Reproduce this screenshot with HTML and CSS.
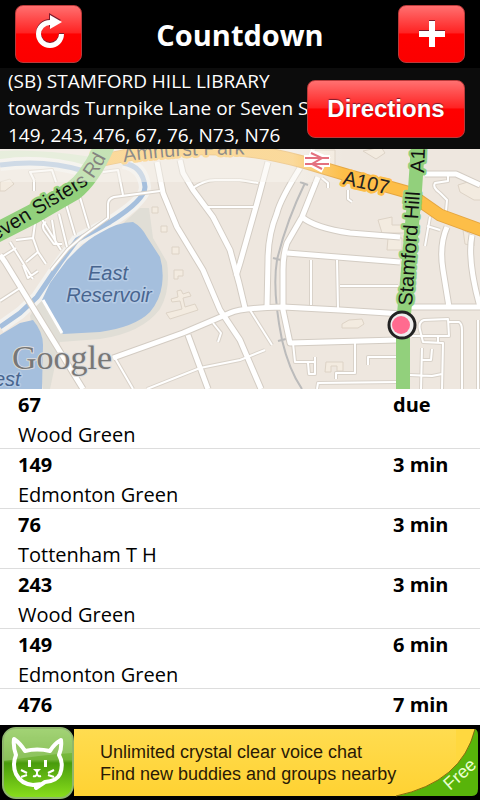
FILE: index.html
```html
<!DOCTYPE html>
<html lang="en">
<head>
  <meta charset="UTF-8">
  <meta name="viewport" content="width=device-width, initial-scale=1">
  <title>Countdown</title>
  <link rel="stylesheet" href="styles.css">
</head>
<body>
  <header class="header">
    <button class="button icon-button" aria-label="Refresh">
      <svg width="32" height="38" viewBox="0 0 32 38">
        <path d="M17 6.500A11.500 11.500 0 1 0 28.500 18" fill="none" stroke="#7a1b2c" stroke-width="5"/>
        <path d="M16 -2v14l12-7z" fill="#7a1b2c"/>
        <path d="M17 7.500A11.500 11.500 0 1 0 28.500 19" fill="none" stroke="#fff" stroke-width="5"/>
        <path d="M17 0v14l12-7z" fill="#fff"/>
      </svg>
    </button>
    <h1>Countdown</h1>
    <button class="button icon-button" aria-label="Add">
      <svg width="28" height="28" viewBox="0 0 28 28">
        <path d="M11 0h6v10h10v6H17v10h-6V16H1v-6h10z" fill="#7a1b2c"/>
        <path d="M11 1h6v10h10v6H17v10h-6V17H1v-6h10z" fill="#fff"/>
      </svg>
    </button>
  </header>

  <section class="stop">
    <p>(SB) STAMFORD HILL LIBRARY</p>
    <p>towards Turnpike Lane or Seven Sisters</p>
    <p>149, 243, 476, 67, 76, N73, N76</p>
    <button class="button directions">Directions</button>
  </section>

  <svg class="map" viewBox="0 149 480 240" preserveAspectRatio="xMidYMid slice" role="img" aria-label="Map of the stop">
    <defs>
      <linearGradient id="fade">
        <stop offset=".85" stop-color="#f8f5ef"/>
        <stop offset="1" stop-color="#f8f5ef" stop-opacity="0"/>
      </linearGradient>
      <g id="minor">
        <path d="M103 172L118 170L123 195"/>
        <path d="M51 270L68 249L83 236L108 218V204Q108 199 114 197L160 191"/>
        <path d="M193 188Q205 180 215 180H240L258 183M207 207H255"/>
        <path d="M34 180L30 172L52 170L56 182M34 180V191M66 204L75 235M79 194L89 228M59 214L67 247M40 216L61 250M52 220L56 245M46 222Q41 224 44 230L54 244H62M16 240L33 238L35 223M33 238L38 252L46 264M10 242L33 279M0 258L16 248M38 252L26 262M23 265L28 278L38 271M0 301L20 288"/>
        <path d="M115 358L133 389M147 389L200 368L240 360L265 350M213 323L221 333L218 342M250 310L272 345"/>
        <path d="M311 260V305M337 260L338 308M340 286H398"/>
        <path d="M355 343V373H336V379M293 343L295 362H315M315 357V374H309L308 363M368 365V357H397M317 389L318 383L397 382"/>
        <path d="M412 336H449L448 319L424 320Q418 322 420 330L423 342L443 343L442 389M438 336V343M449 322L459 322Q462 324 462 330V389M422 348L421 389M432 349L431 360H422M410 375L432 376L442 374M478 320V389"/>
        <path d="M430 217L425 246M427 226L440 230M446 211L447 200L440 193Q432 187 435 183L448 181V175"/>
        <path d="M322 178L328 183V188M348 190V199L352 202"/>
      </g>
      <g id="major">
        <path d="M157 162L163 193L177 227L203 270L220 310L240 340L261 389"/>
        <path d="M180 160L183 173L193 190L213 217L230 250L239 283L245 308"/>
        <path d="M268 162L257 203L240 263L236 276"/>
        <path d="M300 168Q280 200 277 213Q268 235 268 260L267 307"/>
        <path d="M318 177L302 217L287 243Q283 255 283 270V310L290 343L397 340"/>
        <path d="M302 217Q315 228 350 233L400 237M287 253L400 262"/>
        <path d="M113 358L183 333L230 313Q240 308 283 307L340 310L403 314"/>
        <path d="M188 335L208 389M410 307H480M447 227Q439 245 443 270L449 307"/>
        <path d="M472 235Q467 260 480 307M425 174L456 174L480 185"/>
        <path d="M0 255L5 262L83 389"/>
      </g>
      <path id="a107" d="M98 161L123 156Q175 146 240 150Q270 153 303 162L347 175L407 192L440 215L484 231"/>
      <path id="a10" d="M418 145L415 190L408 270L403 325V395"/>
      <path id="a503" d="M-10 236L33 214L73 191Q90 178 105 145"/>
      <path id="a503-label" d="M-16 248L84 187Q97 179 112 145"/>
      <path id="park-label" d="M124 162Q180 153 260 155"/>
    </defs>

    <rect class="land" y="149" width="480" height="240"/>
    <path fill="#e0ded6" d="M140 208H149L153 238L167 262Q171 290 160 309Q142 333 100 339L60 342L50 389H43L30 316L40 298Z"/>
    <path fill="#d6e7ca" d="M0 151Q40 149 92 157L82 170Q40 150 0 160Z"/>
    <g class="blocks">
      <path d="M152 207h6v6h-6zM161 226h6v6h-6zM172 247h7v7h-7zM174 270h9v6h-5v3h-4zM0 182l10-3 4 5-9 7H0zM378 220l14-3v8h18v8h-28zM388 238h14v12h-15zM342 324l7-4 13-1 2 5-6 4h-16zM326 362h17v9h-6v-5h-6v6h-6zM458 185l13-4 13 9v10h-10l-14-8zM463 230l11 6v10l-9-2zM363 151l18-4 4 6-9 6zM315 150h20v20h-14z"/>
      <path d="M166 313l4 6 28-9-3-6-10 3-2-9 8-2-2-4-6 2-2-4-4 1 1 6-7 2 1 3 8-1 2 8z"/>
    </g>

    <path class="bank" d="M0 165Q45 159 84 171M123 163Q143 166 145 187Q145 200 110 222L77 240L60 263L37 297L20 313L0 327"/>
    <path class="canal" d="M0 165Q45 159 84 171M123 163Q143 166 145 187Q145 200 110 222L77 240L60 263L37 297L20 313L0 327"/>
    <path class="water" d="M77 250Q90 238 100 233Q118 222 133 222Q142 227 147 237L160 257Q164 270 162 285Q160 300 150 312Q135 327 100 332L63 334L42 300L50 283L67 260Z"/>
    <path class="water" d="M0 335L20 323L33 320Q43 332 43 345L42 389H0Z"/>
    <path d="M43 300L62 333" stroke="#fff" stroke-width="3"/>

    <path class="rail" d="M305 183Q286 222 277 260Q272 290 282 340Q289 370 302 389M300 182l8 3M273 258l8 2M278 341l8-2"/>
    <use href="#minor" class="casing-minor"/>
    <use href="#major" class="casing-major"/>
    <use href="#minor" class="road-minor"/>
    <use href="#major" class="road-major"/>
    <use href="#a107" class="casing-a107"/>
    <use href="#a107" class="road-a107"/>
    <use href="#a503" class="road-green road-wide"/>
    <use href="#a10" class="road-green"/>

    <text class="label on-orange"><textPath href="#park-label">Amhurst Park</textPath></text>
    <text class="label on-orange" transform="translate(342 184) rotate(13)">A107</text>
    <text class="label on-green"><textPath href="#a503-label">Seven Sisters Rd</textPath></text>
    <text class="label on-green" transform="translate(412 306) rotate(-86)">Stamford Hill</text>
    <text class="label on-green" transform="translate(424 173) rotate(-88)">A10</text>
    <rect class="fade" y="149" width="344" height="33"/>

    <path fill="none" stroke="#fff" stroke-width="6" d="M304 158h26M304 164h26M310 152l14 6-12 6 11 6"/>
    <path fill="none" stroke="#e4717f" stroke-width="2" d="M305 158h24M305 164h24M311 153l11 5-10 6 10 5"/>

    <g class="label on-water">
      <text x="108" y="280">East</text>
      <text x="109" y="302">Reservoir</text>
      <text x="-2" y="386">West</text>
    </g>
    <text class="google" x="12" y="369">Google</text>

    <circle cx="402" cy="325" r="13" fill="#eee" stroke="#222" stroke-width="3"/>
    <circle cx="401" cy="325" r="9" fill="#ff6b8f"/>
  </svg>

  <ul class="arrivals">
    <li><div><b>67</b><span>Wood Green</span></div><b class="due">due</b></li>
    <li><div><b>149</b><span>Edmonton Green</span></div><b class="due">3 min</b></li>
    <li><div><b>76</b><span>Tottenham T H</span></div><b class="due">3 min</b></li>
    <li><div><b>243</b><span>Wood Green</span></div><b class="due">3 min</b></li>
    <li><div><b>149</b><span>Edmonton Green</span></div><b class="due">6 min</b></li>
    <li><div><b>476</b></div><b class="due">7 min</b></li>
  </ul>

  <a class="ad" href="#">
    <svg class="ad-icon" width="72" height="72" viewBox="0 0 72 72">
      <defs>
        <linearGradient id="green" x1="0" y1="0" x2="0" y2="1">
          <stop offset="0" stop-color="#8fca58"/>
          <stop offset=".45" stop-color="#72b437"/>
          <stop offset=".5" stop-color="#489b0c"/>
          <stop offset="1" stop-color="#8ae01c"/>
        </linearGradient>
      </defs>
      <path d="M0 0h72v72H0z"/>
      <rect x="1" y="1" width="70" height="70" rx="13" fill="url(#green)" stroke="#8fb76c" stroke-width="2"/>
      <path d="M2 34V14Q2 2 14 2H58Q70 2 70 14V26Q38 28 2 34Z" fill="#fff" opacity=".18"/>
      <path d="M34 61L43 55Q55 54 58 47Q62 37 57 28Q60 21 59 13Q52 17 48 24Q35 21 23 24Q18 16 12 12Q11 20 14 28Q10 38 14 47Q19 57 31 58L40 57Z" fill="none" stroke="#fff" stroke-width="4" stroke-linejoin="round"/>
      <path d="M26 33h3v7h-3zM42 33h3v7h-3zM31 42h8l-4 4z" fill="#fff"/>
      <path d="M35 44v3q-1 3-4 2M35 47q1 3 4 2M25 46l-6-3M25 48l-6 2M46 46l6-3M46 48l6 2" fill="none" stroke="#fff" stroke-width="2"/>
    </svg>
    <span class="ad-text">Unlimited crystal clear voice chat<br>Find new buddies and groups nearby</span>
    <svg class="ad-corner" width="84" height="68" viewBox="0 0 84 68">
      <path d="M74 0h10v68H74z"/>
      <path d="M0 67Q66 53 79 0V0H60V67Z" fill="#ffd83f"/>
      <path d="M79 0Q82 1 82 6V60Q82 67 76 67H0Q66 53 79 0Z" fill="#58b40a"/>
      <path d="M0 67Q66 53 79 0" fill="none" stroke="#8a6d10" stroke-width="1"/>
      <text transform="translate(54 62) rotate(-42)">Free</text>
    </svg>
  </a>
</body>
</html>
```
FILE: styles.css
```css
* {
  margin: 0;
  padding: 0;
  box-sizing: border-box;
}

body {
  height: 100vh;
  display: flex;
  flex-direction: column;
  overflow: hidden;
  background: #fff;
  color: #000;
  font-family: "Open Sans", "Noto Sans", sans-serif;
  font-size: 20px;
}

.header {
  display: flex;
  justify-content: space-between;
  align-items: center;
  flex: none;
  height: 68px;
  padding: 0 15px;
  background: #000;
  color: #fff;
}

.header h1 {
  font-size: 29px;
  font-weight: 700;
}

.button {
  height: 58px;
  border: 1px solid #b93a3a;
  border-radius: 8px;
  background: linear-gradient(#ff7070, #ff2222 48%, #ff0000 50%, #fb0000);
  color: #fff;
  cursor: pointer;
}

.icon-button {
  display: flex;
  align-items: center;
  justify-content: center;
  width: 67px;
}

.icon-button svg {
  overflow: visible;
}

/* Stop details */
.stop {
  position: relative;
  flex: none;
  padding-left: 8px;
  background: #0c0c0c;
  color: #fff;
  font-size: 19px;
  line-height: 27px;
  white-space: nowrap;
  overflow: hidden;
}

.directions {
  position: absolute;
  top: 12px;
  right: 15px;
  width: 158px;
  font-family: "Liberation Sans", Arial, sans-serif;
  font-size: 24px;
  font-weight: 700;
  text-shadow: 0 -1px 1px #7a1b2c;
}

/* Map */
.map {
  display: block;
  flex: none;
  width: 100%;
  height: 240px;
}

.land {
  fill: #eee7df;
}

.blocks {
  fill: #f3ebe0;
  stroke: #ddd3c6;
}

.water {
  fill: #a5bfdd;
}

.bank,
.canal {
  fill: none;
  stroke: #a5bfdd;
  stroke-width: 5;
}

.bank {
  stroke: #f3f2ef;
  stroke-width: 12;
}

.rail {
  fill: none;
  stroke: #bbb;
  stroke-width: 2;
}

.casing-minor,
.casing-major,
.road-minor,
.road-major {
  fill: none;
  stroke: #fff;
  stroke-width: 2;
  stroke-linejoin: round;
}

.casing-minor {
  stroke: #d9d2c9;
  stroke-width: 4;
}

.casing-major {
  stroke: #d3ccc3;
  stroke-width: 7;
}

.road-major {
  stroke-width: 5;
}

.casing-a107,
.road-a107 {
  fill: none;
  stroke: #e5a640;
  stroke-width: 13;
}

.road-a107 {
  stroke: #fdbe48;
  stroke-width: 11;
}

.road-green {
  fill: none;
  stroke: #92d07c;
  stroke-width: 14;
}

.road-wide {
  stroke-width: 20;
}

.label {
  font-family: "Liberation Sans", Arial, sans-serif;
  font-size: 20px;
  paint-order: stroke;
  stroke-width: 5;
  stroke-linejoin: round;
}

.on-green {
  fill: #111;
  stroke: #92d07c;
}

.on-orange {
  fill: #222;
  stroke: #fdbe48;
}

.on-water {
  fill: #48658f;
  stroke: #b5cbe5;
  stroke-width: 3;
  font-style: italic;
  text-anchor: middle;
}

.fade {
  fill: url(#fade);
  opacity: 0.5;
}

.google {
  font-family: "Liberation Serif", "Times New Roman", serif;
  font-size: 34px;
  fill: #777;
  stroke: #ddd;
  stroke-width: 2;
  paint-order: stroke;
}

/* Arrivals */
.arrivals {
  flex: 1;
  min-height: 0;
  overflow: hidden;
  list-style: none;
}

.arrivals li {
  display: flex;
  justify-content: space-between;
  height: 60px;
  padding: 1px 0 0 18px;
  border-bottom: 1px solid #ddd;
  line-height: 30px;
}

.arrivals span {
  display: block;
}

.due {
  width: 87px;
}

/* Banner */
.ad {
  display: flex;
  align-items: center;
  flex: none;
  height: 75px;
  padding: 0 2px;
  background: linear-gradient(#000 4px, #ffdc50 4px, #ffd232 71px, #000 71px);
  color: #2a1a05;
  font-family: "Liberation Sans", Arial, sans-serif;
  font-size: 18px;
  line-height: 22px;
  text-decoration: none;
  box-shadow: inset 2px 0 #000, inset -2px 0 #000;
}

.ad-text {
  flex: 1;
  padding-left: 26px;
  white-space: nowrap;
}

.ad-icon {
  flex: none;
}

.ad-corner {
  flex: none;
}

.ad-corner text {
  fill: #eaffd0;
}
```
